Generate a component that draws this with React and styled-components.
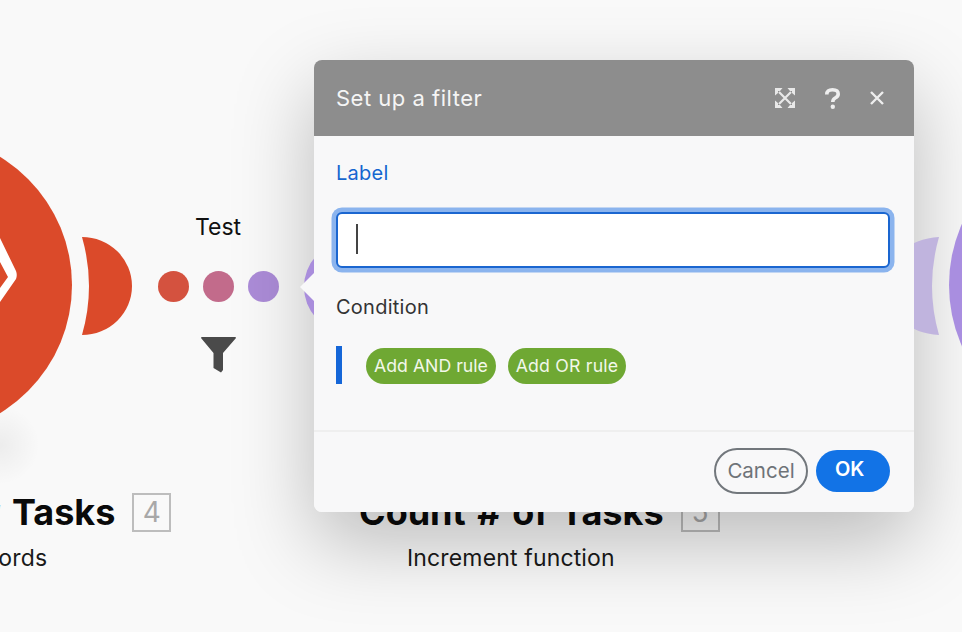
import React from "react";
import styled, { createGlobalStyle } from "styled-components";

const GlobalStyle = createGlobalStyle`
  html, body {
    margin: 0;
    padding: 0;
    background: #f9f9f9;
    font-family: Inter, "Liberation Sans", sans-serif;
  }
`;

const Canvas = styled.div`
  position: relative;
  width: 962px;
  height: 632px;
  overflow: hidden;
  background: #f9f9f9;
`;

const Drawing = styled.svg`
  position: absolute;
  left: ${(p) => p.$x}px;
  top: ${(p) => p.$y}px;
`;

const NodeShade = styled.div`
  position: absolute;
  left: -40px;
  top: 405px;
  width: 80px;
  height: 80px;
  border-radius: 50%;
  background: radial-gradient(circle, rgba(0, 0, 0, 0.05), rgba(0, 0, 0, 0) 70%);
`;

const NodeTitle = styled.div`
  position: absolute;
  left: ${(p) => p.$x}px;
  top: 490px;
  display: flex;
  align-items: center;
  gap: 17px;
  white-space: nowrap;
  font-size: 36px;
  word-spacing: 3px;
  line-height: 44px;
  font-weight: 700;
  color: #0a0a0a;
`;

const Count = styled.span`
  box-sizing: border-box;
  width: 39px;
  height: 39px;
  border: 2px solid #bdbdbd;
  display: flex;
  align-items: center;
  justify-content: center;
  font-size: 28px;
  font-weight: 400;
  color: #a8a8a8;
`;

const NodeSub = styled.div`
  position: absolute;
  left: ${(p) => p.$x}px;
  top: 545px;
  font-size: 23px;
  line-height: 26px;
  letter-spacing: 0.15px;
  color: #1a1a1a;
  white-space: nowrap;
`;

const LinkLabel = styled.div`
  position: absolute;
  left: 195px;
  top: 214px;
  font-size: 23px;
  line-height: 26px;
  color: #111;
`;

const Dot = styled.span`
  position: absolute;
  top: 271px;
  left: ${(p) => p.$x}px;
  width: 31px;
  height: 31px;
  border-radius: 50%;
  background: ${(p) => p.$color};
`;

const ModalShadow = styled.div`
  position: absolute;
  left: 314px;
  top: 60px;
  width: 600px;
  height: 452px;
  border-radius: 8px;
  box-shadow: 0 30px 80px rgba(0, 0, 0, 0.25);
`;

const Modal = styled.div`
  position: absolute;
  left: 314px;
  top: 60px;
  width: 600px;
  height: 452px;
  display: flex;
  flex-direction: column;
  border-radius: 8px;
  overflow: hidden;
  background: #f8f8f9;
`;

const Header = styled.div`
  height: 76px;
  flex: none;
  display: flex;
  align-items: center;
  padding: 0 30px 0 22px;
  background: #8d8d8d;
  color: #f5f5f5;
`;

const HeaderTitle = styled.div`
  flex: 1;
  font-size: 22px;
  letter-spacing: 0.5px;
`;

const HeaderIcons = styled.div`
  display: flex;
  align-items: center;
  gap: 30px;
`;

const Body = styled.div`
  flex: 1;
  display: flex;
  flex-direction: column;
  padding: 23px 24px 0 22px;
`;

const LabelText = styled.div`
  font-size: 20px;
  line-height: 28px;
  letter-spacing: 0.25px;
  color: #1566d0;
`;

const Input = styled.div`
  box-sizing: border-box;
  height: 56px;
  margin-top: 25px;
  padding: 10px 18px;
  background: #fff;
  border: 2px solid #1a66d0;
  border-radius: 6px;
  box-shadow: 0 0 0 4.5px #8bb4ee;
`;

const Caret = styled.div`
  width: 2px;
  height: 30px;
  background: #444;
`;

const ConditionText = styled.div`
  margin-top: 25px;
  font-size: 20px;
  line-height: 28px;
  letter-spacing: 0.25px;
  color: #333;
`;

const Rules = styled.div`
  display: flex;
  align-items: flex-end;
  gap: 12px;
  margin-top: 25px;
  height: 38px;
  border-left: 6px solid #1566d8;
  padding-left: 24px;
`;

const RuleButton = styled.div`
  box-sizing: border-box;
  width: ${(p) => p.$width}px;
  height: 36px;
  display: flex;
  align-items: center;
  justify-content: center;
  padding-bottom: 2px;
  border-radius: 18px;
  background: #6fa833;
  color: #f2f7ea;
  font-size: 17.7px;
  letter-spacing: ${(p) => p.$track || 0}px;
  white-space: nowrap;
`;

const Footer = styled.div`
  box-sizing: border-box;
  height: 82px;
  flex: none;
  display: flex;
  align-items: center;
  justify-content: flex-end;
  gap: 8px;
  padding: 0 24px 2px 0;
  border-top: 2px solid #efefef;
`;

const CancelButton = styled.div`
  box-sizing: border-box;
  width: 94px;
  height: 46px;
  display: flex;
  align-items: center;
  justify-content: center;
  padding-bottom: 2px;
  border: 2px solid #72777c;
  border-radius: 23px;
  color: #6e7378;
  font-size: 20.5px;
`;

const OkButton = styled.div`
  width: 74px;
  height: 42px;
  display: flex;
  align-items: center;
  padding-left: 19px;
  box-sizing: border-box;
  padding-bottom: 4px;
  border-radius: 21px;
  background: #1273e6;
  color: #fff;
  font-size: 20px;
  font-weight: 600;
`;

export default function App() {
  return (
    <>
      <GlobalStyle />
      <Canvas>
        <NodeShade />
        <Drawing $x={0} $y={120} width="140" height="330" viewBox="0 120 140 330">
          <circle cx="-78" cy="285" r="150" fill="#db4a2a" />
          <path d="M0 238 L16 271 Q17.5 275 16 279 L0 302 V288 L8 277 L0 262Z" fill="#fff" />
          <path d="M82 237 A50 49 0 0 1 82 335 Q96 286 82 237Z" fill="#db4a2a" />
        </Drawing>
        <LinkLabel>Test</LinkLabel>
        <Dot $x={158} $color="#d4523f" />
        <Dot $x={203} $color="#c26b8b" />
        <Dot $x={248} $color="#ac8cd8" />
        <Drawing $x={200} $y={336} width="37" height="38" viewBox="0 0 37 38">
          <path d="M1 2 Q1 1 2 1 H35 Q36 1 36 2 L23 17 V34 L21 36.5 L13.5 32 V17 Z" fill="#4a4a4a" />
        </Drawing>
        <NodeTitle $x={-23}>
          <span># Tasks</span>
          <Count>4</Count>
        </NodeTitle>
        <NodeSub $x={-37}>records</NodeSub>
        <NodeTitle $x={359}>
          <span>Count # of Tasks</span>
          <Count>5</Count>
        </NodeTitle>
        <NodeSub $x={407}>Increment function</NodeSub>
        <ModalShadow />
        <Drawing $x={296} $y={240} width="30" height="90" viewBox="296 240 30 90">
          <path d="M316 256 A46 46 0 0 0 316 318Z" fill="#a98ddc" />
          <path d="M316 271 L300 287 L316 303Z" fill="#f8f8f9" />
        </Drawing>
        <Drawing $x={900} $y={220} width="62" height="140" viewBox="900 220 62 140">
          <path d="M939 237 A60 49 0 0 0 900 252 V320 A60 49 0 0 0 939 335 Q925 286 939 237Z" fill="#c0b4de" />
          <circle cx="1100" cy="285" r="151" fill="#a98ee0" />
        </Drawing>
        <Modal>
          <Header>
            <HeaderTitle>Set up a filter</HeaderTitle>
            <HeaderIcons>
              <svg width="20" height="20" viewBox="0 0 20 20" fill="#e8e8e8" stroke="none">
                <path d="M4 4 L16 16 M16 4 L4 16" stroke="#e8e8e8" strokeWidth="2.2" />
                <path d="M0 0 H7.5 L5 3 H3 V5 L0 7.5Z" />
                <path d="M20 0 H12.5 L15 3 H17 V5 L20 7.5Z" />
                <path d="M0 20 H7.5 L5 17 H3 V15 L0 12.5Z" />
                <path d="M20 20 H12.5 L15 17 H17 V15 L20 12.5Z" />
              </svg>
              <svg width="15" height="21" viewBox="0 0 15 21" fill="none" stroke="#eee" strokeWidth="3.6">
                <path d="M1.8 6.5 Q1.8 1.8 7.5 1.8 Q13.2 1.8 13.2 6 Q13.2 8.5 10.2 10 Q7.8 11.2 7.8 14" />
                <circle cx="7.8" cy="18.8" r="2.2" fill="#eee" stroke="none" />
              </svg>
              <svg width="14" height="14" viewBox="0 0 14 14" fill="none" stroke="#eee" strokeWidth="2.4">
                <path d="M1 1 L13 13 M13 1 L1 13" />
              </svg>
            </HeaderIcons>
          </Header>
          <Body>
            <LabelText>Label</LabelText>
            <Input>
              <Caret />
            </Input>
            <ConditionText>Condition</ConditionText>
            <Rules>
              <RuleButton $width={130}>Add AND rule</RuleButton>
              <RuleButton $width={118} $track={0.2}>Add OR rule</RuleButton>
            </Rules>
          </Body>
          <Footer>
            <CancelButton>Cancel</CancelButton>
            <OkButton>OK</OkButton>
          </Footer>
        </Modal>
      </Canvas>
    </>
  );
}
